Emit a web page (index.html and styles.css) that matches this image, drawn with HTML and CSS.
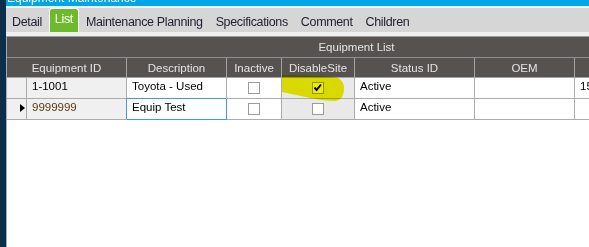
FILE: index.html
```html
<!DOCTYPE html>
<html>
<head>
  <meta name="viewport" content="width=device-width, initial-scale=1">
  <link rel="stylesheet" href="styles.css">
</head>
<body>
  <div class="window">
    <div class="edge"></div>
    <div class="main">
      <div class="titlebar"><span>Equipment Maintenance</span></div>

      <div class="tabs">
        <div class="tab">Detail</div>
        <div class="tab active">List</div>
        <div class="tab">Maintenance Planning</div>
        <div class="tab">Specifications</div>
        <div class="tab">Comment</div>
        <div class="tab">Children</div>
      </div>

      <div class="sheet">
        <div class="grid">
          <div class="band">Equipment List</div>

          <div class="row head">
            <div class="cell wide">Equipment ID</div>
            <div class="cell">Description</div>
            <div class="cell">Inactive</div>
            <div class="cell">DisableSite</div>
            <div class="cell">Status ID</div>
            <div class="cell">OEM</div>
            <div class="cell"></div>
          </div>

          <div class="row">
            <div class="cell sel"></div>
            <div class="cell ro">1-1001</div>
            <div class="cell">Toyota - Used</div>
            <div class="cell check"><span class="box"></span></div>
            <div class="cell check grey">
              <span class="box">
                <svg width="10" height="10" viewBox="0 0 10 10"><polyline points="1.5,4.5 3.6,7 8,1.5" fill="none" stroke="#000" stroke-width="2"/></svg>
              </span>
            </div>
            <div class="cell">Active</div>
            <div class="cell"></div>
            <div class="cell">15</div>
          </div>

          <div class="row">
            <div class="cell sel"><span class="mark"></span></div>
            <div class="cell ro current">9999999</div>
            <div class="cell focus">Equip Test</div>
            <div class="cell check"><span class="box"></span></div>
            <div class="cell check grey"><span class="box"></span></div>
            <div class="cell">Active</div>
            <div class="cell"></div>
            <div class="cell"></div>
          </div>

          <!-- marker stroke drawn over the checked box -->
          <svg class="highlight" width="64" height="29" viewBox="0 0 64 29">
            <path d="M1,1 C20,1 40,2 52,3 C60,4 63,8 63,14 C63,21 61,26 54,27 C40,27 20,22 1,18 Z" fill="#eeee00"/>
          </svg>
        </div>
      </div>
    </div>
  </div>
</body>
</html>
```

FILE: styles.css
```css
body {
  margin: 0;
  background-color: #fff;
  font-family: "Liberation Sans", Arial, sans-serif;
}

.window {
  display: flex;
  height: 247px;
  overflow: hidden;
}

.edge {
  flex: none;
  width: 6px;
  background-color: #0b2e4a;
}

.main {
  flex: 1;
  min-width: 0;
  display: flex;
  flex-direction: column;
}

.titlebar {
  flex: none;
  height: 6px;
  padding-left: 1px;
  background-color: #00a7e7;
  border-bottom: 2px solid #f2f2f2;
  overflow: hidden;
  color: #fff;
  font-size: 12px;
  line-height: 12px;
}
.titlebar span {
  display: block;
  margin-top: -8px;
}

.tabs {
  flex: none;
  display: flex;
  gap: 1px;
  height: 24px;
  background-color: #d6d6d6;
  font-size: 12.5px;
  letter-spacing: -0.35px;
  color: #1e1e30;
}

.tab {
  padding: 7px 6px 0;
  line-height: 15px;
  white-space: nowrap;
}
.tab.active {
  padding: 3px 5px 0;
  background-color: #6dbb2c;
  color: #fff;
  border: 1px solid #fff;
  border-bottom: 0;
  border-radius: 3px 3px 0 0;
}

.sheet {
  flex: 1;
  display: flex;
  flex-direction: column;
  border-top: 4px solid #f0f0f0;
  overflow: hidden;
}

.grid {
  flex: 1;
  position: relative;
  width: 699px;
  border-top: 1px solid #9c9c9c;
  border-left: 1px solid #a8a8a8;
  font-size: 11.5px;
  color: #000;
}

.band {
  height: 21px;
  box-sizing: border-box;
  background-color: #56524f;
  border-bottom: 1px solid #8e8e8e;
  color: #e4e4e4;
  text-align: center;
  line-height: 20px;
}

.row {
  display: grid;
  grid-template-columns: 20px 100px 100px 55px 73px 120px 100px 130px;
}

.cell {
  box-sizing: border-box;
  height: 21px;
  padding-left: 5px;
  border-right: 1px solid #ababab;
  border-bottom: 1px solid #ababab;
  background-color: #fff;
  line-height: 16px;
  white-space: nowrap;
  overflow: hidden;
}

.head .cell {
  height: 20px;
  padding: 1px 0 0;
  background-color: #56524f;
  border-color: #a4a4a4;
  color: #e4e4e4;
  text-align: center;
  line-height: 18px;
}
.head .wide {
  grid-column: span 2;
}

.sel,
.ro {
  background-color: #f0f0f0;
}
.grey {
  background-color: #e9e9e9;
}
.current {
  color: #5a3a12;
}

.focus {
  border-right-color: #3a9af0;
  border-bottom-color: #3a9af0;
  box-shadow: -1px -1px 0 0 #3a9af0;
}

.check {
  padding: 0;
}

.box {
  display: block;
  width: 12px;
  height: 12px;
  margin: 4px auto 0;
  box-sizing: border-box;
  border: 1px solid #9b9b9b;
  background-color: #fff;
}
.box svg {
  display: block;
}

.mark {
  display: block;
  width: 0;
  height: 0;
  margin: 5px 0 0 8px;
  border-left: 5px solid #000;
  border-top: 4px solid transparent;
  border-bottom: 4px solid transparent;
}

.highlight {
  position: absolute;
  left: 274px;
  top: 37px;
  mix-blend-mode: multiply;
  pointer-events: none;
}
```
